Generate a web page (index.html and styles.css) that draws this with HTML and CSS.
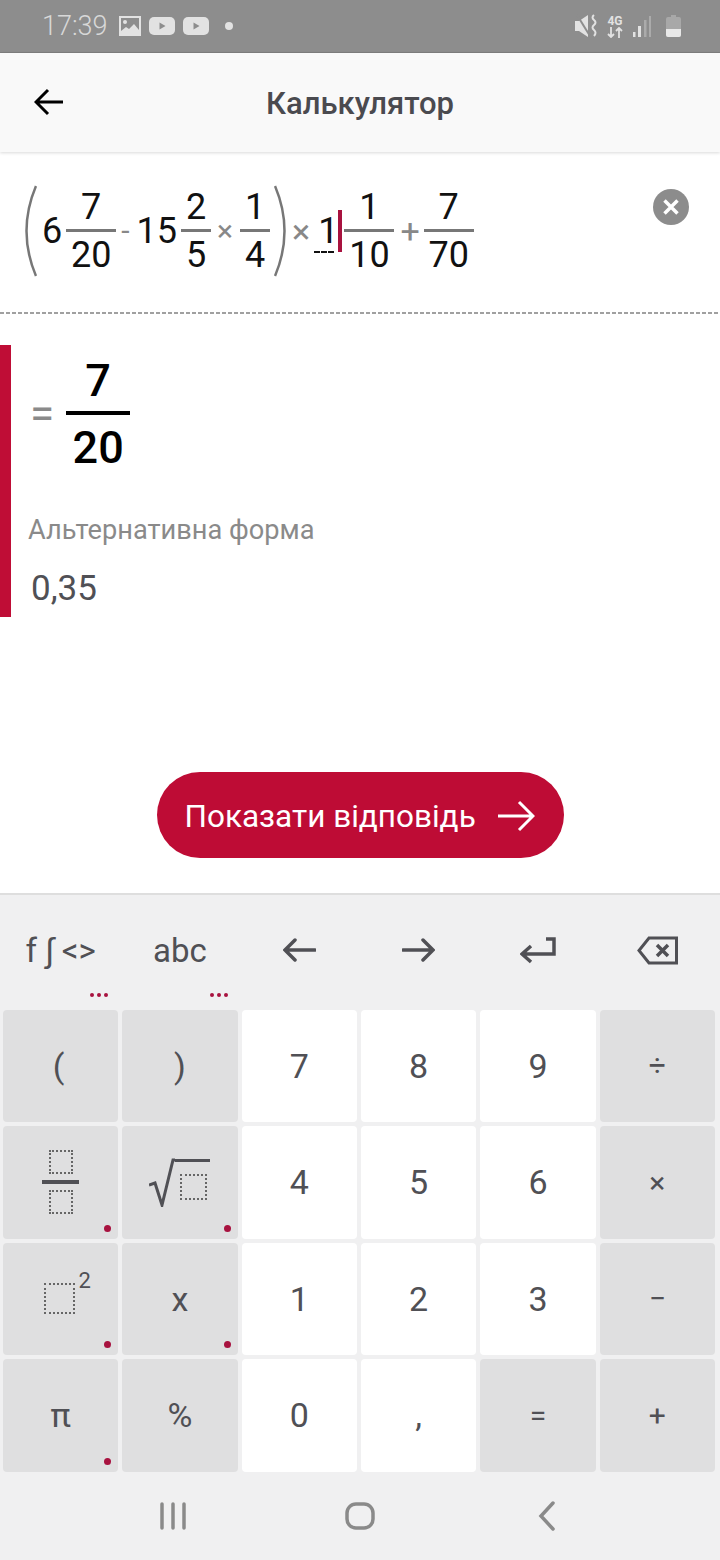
FILE: index.html
```html
<!DOCTYPE html>
<html lang="uk">
<head>
  <meta charset="UTF-8" />
  <meta name="viewport" content="width=device-width, initial-scale=1.0"/>
  <title>Калькулятор</title>
  <link rel="stylesheet" href="styles.css">
</head>
<body>
  <div class="status-bar">
    <span class="time">17:39</span>
    <svg class="st-icon" width="22" height="20" viewBox="0 0 22 20"><rect width="22" height="20" fill="#e2e2e2"/><rect x="2" y="2" width="18" height="14" fill="#8d8d8d"/><circle cx="6" cy="6" r="2" fill="#e2e2e2"/><path d="M2 15l5-4 3 2 5-5 5 6v2H2z" fill="#e2e2e2"/></svg>
    <svg class="st-icon" width="26" height="18" viewBox="0 0 26 18"><rect width="26" height="18" rx="5" fill="#e2e2e2"/><path d="M10.500 5.500l6 3.500-6 3.500z" fill="#8d8d8d"/></svg>
    <svg class="st-icon" width="26" height="18" viewBox="0 0 26 18"><rect width="26" height="18" rx="5" fill="#e2e2e2"/><path d="M10.500 5.500l6 3.500-6 3.500z" fill="#8d8d8d"/></svg>
    <span class="st-dot"></span>
    <span class="st-right">
      <svg width="23" height="24" viewBox="0 0 23 24"><path d="M1 7h4l9-6v22l-9-6H1z" fill="#e2e2e2"/><path d="M3 1l13 21" stroke="#8d8d8d" stroke-width="2"/><path d="M20 1q-3 2.500 0 5t0 5 0 5 0 6" fill="none" stroke="#e2e2e2" stroke-width="2"/></svg>
      <span class="net">4G<svg width="16" height="11" viewBox="0 0 16 11"><path d="M4 0v10M1 7l3 3 3-3M12 11V1M9 4l3-3 3 3" fill="none" stroke="#e2e2e2" stroke-width="1.800"/></svg></span>
      <svg width="18" height="21" viewBox="0 0 18 21"><rect x="0" y="16" width="2.500" height="5" fill="#e2e2e2"/><rect x="5" y="10" width="3" height="11" fill="#e2e2e2"/><rect x="11" y="4" width="2.500" height="17" fill="#ababab"/><rect x="16" y="0" width="2" height="21" fill="#ababab"/></svg>
      <svg class="batt" width="15" height="22" viewBox="0 0 15 22"><path d="M5 0h5v2h3q2 0 2 2v16q0 2-2 2H2q-2 0-2-2V4q0-2 2-2h3z" fill="#a8a8a8"/><path d="M0 14h15v6q0 2-2 2H2q-2 0-2-2z" fill="#e8e8e8"/></svg>
    </span>
  </div>

  <header class="app-bar">
    <svg class="back" width="30" height="28" viewBox="0 0 30 28"><path d="M29 14H2M14 2L2 14l12 12" fill="none" stroke="#000" stroke-width="3"/></svg>
    <h1>Калькулятор</h1>
  </header>

  <div class="expr">
    <div class="math">
      <svg class="paren" width="13" height="92" viewBox="0 0 13 92"><path d="M12 1Q-7 46 12 91" fill="none" stroke="#777" stroke-width="2.500"/></svg>
      <span class="num n-six">6</span>
      <span class="frac f-wide"><span>7</span><i></i><span>20</span></span>
      <span class="op op-minus">-</span>
      <span class="num n-fifteen">15</span>
      <span class="frac f-narrow"><span>2</span><i></i><span>5</span></span>
      <span class="op op-times">×</span>
      <span class="frac f-narrow"><span>1</span><i></i><span>4</span></span>
      <svg class="paren paren-r" width="13" height="92" viewBox="0 0 13 92"><path d="M1 1Q20 46 1 91" fill="none" stroke="#777" stroke-width="2.500"/></svg>
      <span class="op op-times2">×</span>
      <span class="num n-one">1<b class="dash"></b></span>
      <span class="cursor"></span>
      <span class="frac f-wide f-tight"><span>1</span><i></i><span>10</span></span>
      <span class="op op-plus">+</span>
      <span class="frac f-wide"><span>7</span><i></i><span>70</span></span>
    </div>
    <span class="clear">
      <svg width="36" height="36" viewBox="0 0 36 36"><circle cx="18" cy="18" r="18" fill="#8c8c8c"/><path d="M11.500 11.500l13 13M24.500 11.500l-13 13" stroke="#fff" stroke-width="3.500"/></svg>
    </span>
  </div>
  <div class="sep"></div>

  <section class="result">
    <div class="answer">
      <span class="eq">=</span>
      <span class="big-frac"><span>7</span><i></i><span>20</span></span>
    </div>
    <div class="alt-label">Альтернативна форма</div>
    <div class="alt-value">0,35</div>
  </section>

  <div class="action">
    <button class="show-btn">Показати відповідь
      <svg width="38" height="32" viewBox="0 0 38 32"><path d="M1 16h35M22 2l14 14-14 14" fill="none" stroke="#fff" stroke-width="3"/></svg>
    </button>
  </div>

  <div class="keyboard">
    <div class="tools">
      <div class="tool tool-txt">f ∫ &lt;&gt;<span class="more"><b></b><b></b><b></b></span></div>
      <div class="tool tool-txt">abc<span class="more"><b></b><b></b><b></b></span></div>
      <div class="tool"><svg width="33" height="24" viewBox="0 0 33 24"><path d="M32 12H2M12 2L2 12l10 10" fill="none" stroke="#505055" stroke-width="3.500" stroke-linecap="round"/></svg></div>
      <div class="tool"><svg width="33" height="24" viewBox="0 0 33 24"><path d="M1 12h30M21 2l10 10-10 10" fill="none" stroke="#505055" stroke-width="3.500" stroke-linecap="round"/></svg></div>
      <div class="tool"><svg width="36" height="27" viewBox="0 0 36 27"><path d="M26 2h8v15H3M11 9l-9 8 9 8" fill="none" stroke="#505055" stroke-width="3.500"/></svg></div>
      <div class="tool"><svg width="41" height="29" viewBox="0 0 41 29"><path d="M39.500 2H12L2 14.500 12 27h27.500z" fill="none" stroke="#505055" stroke-width="3"/><path d="M20 9l11 11M31 9L20 20" stroke="#505055" stroke-width="3.500"/></svg></div>
    </div>
    <div class="keys">
      <div class="key fn paren-key">(</div>
      <div class="key fn">)</div>
      <div class="key">7</div>
      <div class="key">8</div>
      <div class="key">9</div>
      <div class="key fn sm">÷</div>

      <div class="key fn dot">
        <span class="k-frac"><i class="box"></i><i class="k-bar"></i><i class="box"></i></span>
      </div>
      <div class="key fn dot">
        <span class="k-root">
          <svg width="26" height="49" viewBox="0 0 26 49"><path d="M0 27l6-2 7 22L24 2h2" fill="none" stroke="#505055" stroke-width="3"/></svg>
          <span class="k-root-in"><i class="box box-root"></i></span>
        </span>
      </div>
      <div class="key">4</div>
      <div class="key">5</div>
      <div class="key">6</div>
      <div class="key fn sm">×</div>

      <div class="key fn dot">
        <span class="k-pow"><i class="box box-lg"></i><sup>2</sup></span>
      </div>
      <div class="key fn dot">x</div>
      <div class="key">1</div>
      <div class="key">2</div>
      <div class="key">3</div>
      <div class="key fn sm">−</div>

      <div class="key fn dot">π</div>
      <div class="key fn">%</div>
      <div class="key">0</div>
      <div class="key">,</div>
      <div class="key fn sm">=</div>
      <div class="key fn sm">+</div>
    </div>
    <nav class="nav-bar">
      <svg width="28" height="28" viewBox="0 0 28 28"><path d="M3 2v24M14 2v24M25 2v24" stroke="#8a8a8a" stroke-width="3.500" stroke-linecap="round"/></svg>
      <svg width="30" height="28" viewBox="0 0 30 28"><rect x="2" y="2" width="26" height="24" rx="9" fill="none" stroke="#8a8a8a" stroke-width="3.500"/></svg>
      <svg width="18" height="30" viewBox="0 0 18 30"><path d="M15 2L3 15l12 13" fill="none" stroke="#8a8a8a" stroke-width="3.500" stroke-linecap="round"/></svg>
    </nav>
  </div>
</body>
</html>
```

FILE: styles.css
```css
* {
  box-sizing: border-box;
}
body {
  margin: 0;
  width: 720px;
  height: 1560px;
  overflow: hidden;
  background: #fff;
  font-family: Roboto, "Noto Sans", sans-serif;
}

/* status bar */
.status-bar {
  height: 53px;
  background: #8d8d8d;
  border-bottom: 1px solid #7f7f7f;
  display: flex;
  align-items: center;
  padding: 0 38px 0 42px;
  color: #d8d8d8;
}
.time {
  font-size: 27px;
  font-weight: 300;
  margin-right: 11px;
}
.st-icon {
  margin-right: 8px;
}
.st-dot {
  width: 8px;
  height: 8px;
  border-radius: 50%;
  background: #e2e2e2;
  margin-left: 8px;
}
.st-right {
  margin-left: auto;
  display: flex;
  align-items: center;
  gap: 10px;
}
.net {
  display: flex;
  flex-direction: column;
  align-items: center;
  font-size: 12px;
  line-height: 12px;
  font-weight: 700;
  color: #e2e2e2;
}
.batt {
  margin: 0 1px 0 5px;
}

/* app bar */
.app-bar {
  height: 99px;
  padding-top: 2px;
  background: #f9f9f9;
  box-shadow: 0 1px 3px rgba(0, 0, 0, 0.15);
  display: flex;
  align-items: center;
  justify-content: center;
  position: relative;
}
.app-bar h1 {
  margin: 0;
  font-size: 31px;
  font-weight: 500;
  color: #4a4a4f;
}
.back {
  position: absolute;
  left: 34px;
  top: 35px;
}

/* expression */
.expr {
  height: 160px;
  position: relative;
}
.sep {
  height: 2px;
  background: repeating-linear-gradient(90deg, #a0a0a0 0 4px, transparent 4px 6px);
}
.math {
  display: flex;
  align-items: center;
  padding: 2px 0 0 24px;
  height: 156px;
  font-size: 36px;
  color: #111;
}
.num {
  line-height: 40px;
  position: relative;
}
.n-six { margin-left: 5px; }
.n-fifteen { margin-left: 7px; }
.n-one { margin-left: 8px; }
.frac {
  display: flex;
  flex-direction: column;
  align-items: center;
  line-height: 40px;
}
.frac i {
  display: block;
  width: 100%;
  height: 3px;
  margin: 2px 0 3px;
  background: #777;
}
.f-wide {
  width: 50px;
  margin-left: 4px;
}
.f-narrow {
  width: 30px;
  margin-left: 4px;
}
.f-tight {
  margin-left: 2px;
}
.op {
  color: #888;
  line-height: 40px;
  font-size: 30px;
}
.op-minus { margin-left: 5px; }
.op-times { margin-left: 6px; margin-right: 3px; }
.op-times2 { margin-left: 5px; font-size: 34px; }
.op-plus { margin-left: 6px; font-size: 34px; }
.paren-r { margin-left: 4px; }
.cursor {
  width: 4px;
  height: 42px;
  background: #a8123f;
}
.dash {
  position: absolute;
  left: -4px;
  bottom: -2px;
  width: 20px;
  border-bottom: 2px dashed #111;
}
.clear {
  position: absolute;
  left: 653px;
  top: 37px;
  line-height: 0;
}

/* result */
.result {
  margin-top: 31px;
  height: 272px;
  border-left: 11px solid #bf0d36;
  padding-left: 17px;
}
.answer {
  display: flex;
  align-items: center;
  height: 138px;
}
.eq {
  font-size: 44px;
  color: #8a8a8a;
  margin: 0 12px 0 2px;
}
.big-frac {
  width: 64px;
  display: flex;
  flex-direction: column;
  align-items: center;
  font-size: 45px;
  font-weight: 500;
  line-height: 52px;
  color: #000;
}
.big-frac i {
  display: block;
  width: 100%;
  height: 4px;
  margin: 4px 0 7px;
  background: #000;
}
.alt-label {
  margin-top: 27px;
  font-size: 27.200px;
  line-height: 40px;
  color: #8a8a8a;
}
.alt-value {
  margin: 19px 0 0 3px;
  font-size: 35px;
  line-height: 40px;
  color: #505055;
}

/* button */
.action {
  display: flex;
  justify-content: center;
  margin-top: 155px;
}
.show-btn {
  width: 407px;
  height: 86px;
  border: none;
  border-radius: 43px;
  background: #be0c35;
  color: #fff;
  font-family: inherit;
  font-size: 31.500px;
  display: flex;
  align-items: center;
  justify-content: space-between;
  padding: 2px 29px 0 28px;
}

/* keyboard */
.keyboard {
  margin-top: 35px;
  height: 667px;
  background: #f0f0f1;
  border-top: 2px solid #dedede;
}
.tools {
  height: 114.500px;
  display: grid;
  grid-template-columns: repeat(6, 1fr);
  gap: 4px;
  padding: 0 5px 0 3px;
}
.tool {
  position: relative;
  display: flex;
  align-items: center;
  justify-content: center;
  padding-bottom: 4px;
  color: #505055;
}
.tool-txt {
  font-size: 33px;
}
.more {
  position: absolute;
  right: 10px;
  bottom: 13px;
  display: flex;
  gap: 3px;
}
.more b {
  width: 4px;
  height: 4px;
  border-radius: 50%;
  background: #a8123f;
}
.keys {
  display: grid;
  grid-template-columns: repeat(6, 1fr);
  grid-auto-rows: 112.500px;
  gap: 4px;
  padding: 0 5px 0 3px;
}
.key {
  position: relative;
  background: #fff;
  border-radius: 4px;
  display: flex;
  align-items: center;
  justify-content: center;
  font-size: 34px;
  color: #505055;
}
.fn {
  background: #dfdfe0;
}
.paren-key {
  padding-right: 4px;
}
.sm {
  font-size: 30px;
}
.dot::after {
  content: "";
  position: absolute;
  right: 7px;
  bottom: 7px;
  width: 7px;
  height: 7px;
  border-radius: 50%;
  background: #a8123f;
}
.box {
  display: block;
  width: 24px;
  height: 24px;
  border: 2px dotted #666;
}
.box-lg {
  width: 31px;
  height: 31px;
}
.box-root {
  width: 27px;
  height: 26px;
}
.k-frac {
  display: flex;
  flex-direction: column;
  align-items: center;
}
.k-bar {
  display: block;
  width: 37px;
  height: 4px;
  margin: 6px 0;
  background: #505055;
}
.k-root {
  display: flex;
  align-items: flex-start;
}
.k-root-in {
  border-top: 3px solid #505055;
  padding: 12px 3px 0 5px;
  margin-top: 1px;
}
.k-pow {
  display: flex;
  align-items: flex-start;
  margin: 0 0 0 14px;
}
.k-pow sup {
  font-size: 22px;
  line-height: 22px;
  margin: -13px 0 0 3px;
}
.nav-bar {
  height: 89px;
  display: grid;
  grid-template-columns: 1fr 1fr 1fr;
  justify-items: center;
  align-items: center;
  padding: 0 79px;
}
```
